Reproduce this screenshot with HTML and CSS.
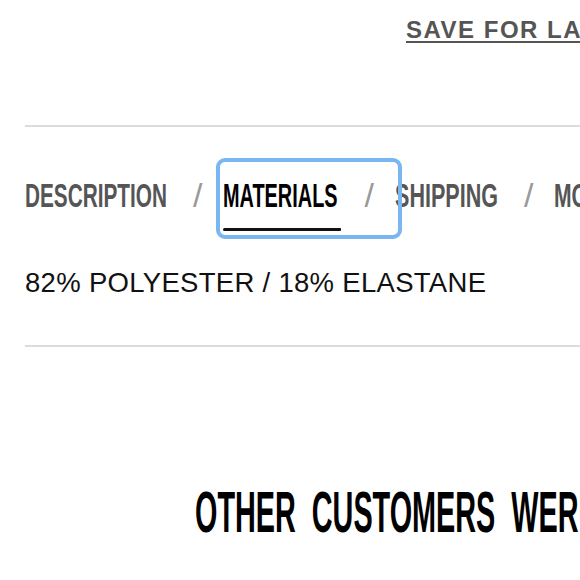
FILE: index.html
```html
<!DOCTYPE html>
<html lang="en">
<head>
<meta charset="utf-8">
<title>Product details</title>
<link rel="stylesheet" href="styles.css">
</head>
<body>
<div class="page">
  <div class="save-row"><a class="save-link" href="#">SAVE FOR LATER</a></div>
  <hr class="rule rule-top">
  <nav class="tabs">
    <div class="tab tab-desc"><span class="tab-label"><span class="tab-text">DESCRIPTION</span></span><span class="tab-sep">/</span></div>
    <div class="tab tab-mat is-active"><span class="tab-label"><span class="tab-text">MATERIALS</span></span><span class="tab-sep">/</span></div>
    <div class="tab tab-ship"><span class="tab-label"><span class="tab-text">SHIPPING</span></span><span class="tab-sep">/</span></div>
    <div class="tab tab-more"><span class="tab-label"><span class="tab-text">MORE</span></span></div>
  </nav>
  <p class="materials">82% POLYESTER / 18% ELASTANE</p>
  <hr class="rule rule-bottom">
  <h2 class="other-title"><span class="other-text">OTHER CUSTOMERS WERE ALSO VIEWING</span></h2>
</div>
</body>
</html>
```

FILE: styles.css
```css
html, body {
  margin: 0;
  padding: 0;
  background: #fff;
  overflow: hidden;
}

body {
  font-family: "Liberation Sans", Arial, sans-serif;
  color: #111;
}

.page {
  width: 1100px;
  padding-left: 25px;
}

.save-row {
  padding-top: 16px;
  padding-left: 381px;
  line-height: 28px;
  height: 28px;
}

.save-link {
  font-size: 24px;
  font-weight: 700;
  letter-spacing: 1.5px;
  color: #555;
  text-decoration: underline;
  text-decoration-thickness: 2px;
  text-underline-offset: 3px;
  white-space: nowrap;
}

.rule {
  border: 0;
  height: 2px;
  background: #dcdcdc;
  margin: 0;
}

.rule-top {
  margin-top: 81px;
}

.tabs {
  display: flex;
  align-items: flex-start;
  margin-top: 38px;
}

.tab {
  display: flex;
  align-items: flex-start;
  gap: 25px;
  padding: 13px 21px 1px 0;
  height: 53px;
  border-radius: 2px;
  white-space: nowrap;
}

.tab-label {
  display: flex;
  flex-direction: column;
  width: var(--w);
  font-size: 34px;
  line-height: 34px;
  font-weight: 700;
  color: #555;
}

.tab-text {
  display: inline-block;
  transform: scaleX(var(--s));
  transform-origin: 0 0;
}

.tab-sep {
  font-size: 34px;
  line-height: 34px;
  font-weight: 400;
  color: #9a9a9a;
}

.tab-desc { --w: 143px; --s: 0.611; }
.tab-mat  { --w: 116px; --s: 0.585; }
.tab-ship { --w: 104px; --s: 0.634; }
.tab-more { --w: 60px;  --s: 0.62; }

.tab.is-active {
  position: relative;
  z-index: 1;
  outline: 4px solid #7ab6f2;
  outline-offset: 3px;
}

.tab.is-active .tab-label {
  color: #000;
}

.tab.is-active .tab-label::after {
  content: "";
  display: block;
  width: 118px;
  height: 3px;
  margin-top: 16px;
  background: #111;
  border-radius: 2px 1px 1px 2px;
}

.materials {
  margin: 35px 0 0;
  font-size: 27.5px;
  line-height: 32px;
  letter-spacing: 0.3px;
  font-weight: 400;
  color: #111;
  white-space: nowrap;
}

.rule-bottom {
  margin-top: 46px;
}

.other-title {
  margin: 136px 0 0;
  padding-left: 170px;
  font-size: 57.6px;
  line-height: 58px;
  font-weight: 700;
  color: #000;
  white-space: nowrap;
}

.other-text {
  display: inline-block;
  transform: scaleX(0.5);
  transform-origin: 0 0;
  word-spacing: 16px;
}
```
